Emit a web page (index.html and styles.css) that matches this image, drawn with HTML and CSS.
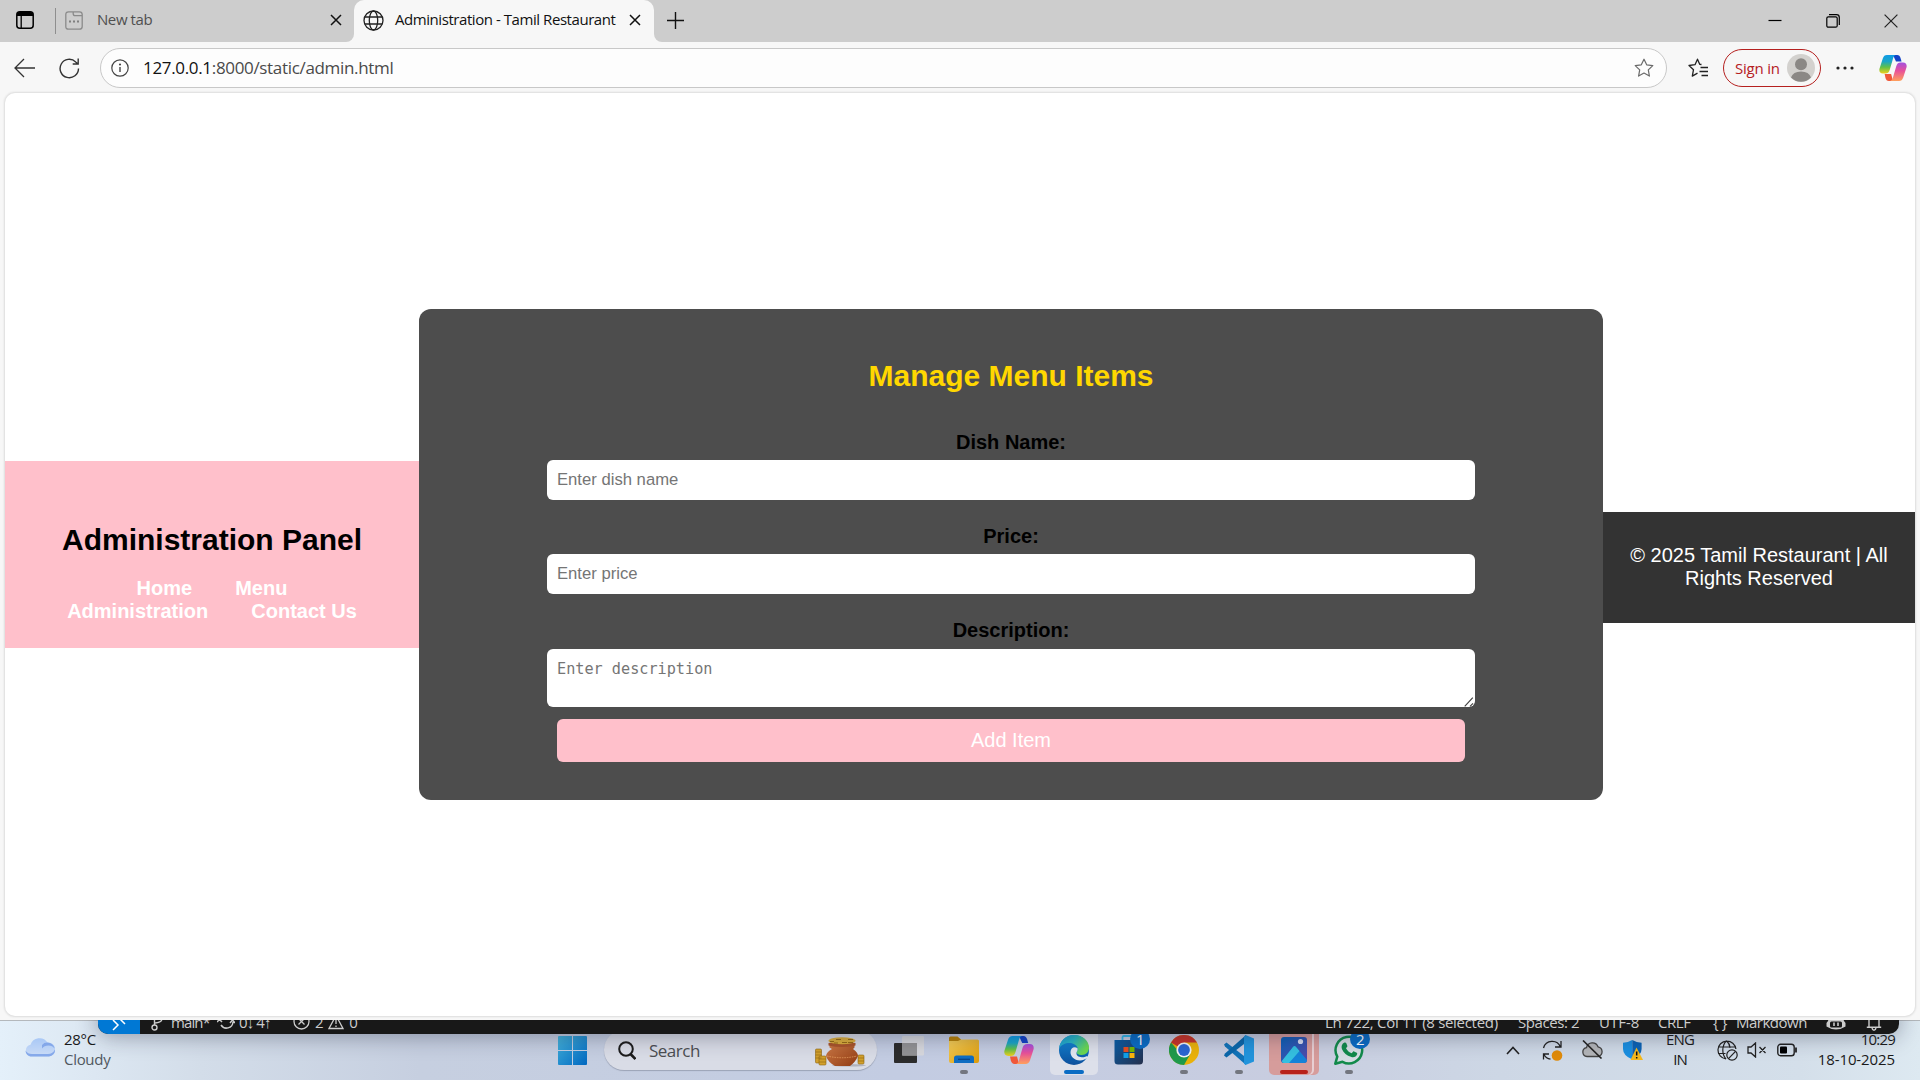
FILE: index.html
```
<!DOCTYPE html>
<html lang="en">
<head>
<meta charset="utf-8">
<title>Administration - Tamil Restaurant</title>
<link rel="stylesheet" href="styles.css">
</head>
<body>
<svg width="0" height="0" class="defs" aria-hidden="true">
  <defs>
    <linearGradient id="cpA" x1="0" y1="0" x2="0" y2="1"><stop offset="0" stop-color="#0f9be6"/><stop offset=".35" stop-color="#1aa6c8"/><stop offset=".65" stop-color="#5fc04a"/><stop offset="1" stop-color="#f0cf1c"/></linearGradient>
    <linearGradient id="cpB" x1="0" y1="0" x2="0" y2="1"><stop offset="0" stop-color="#a250e0"/><stop offset=".45" stop-color="#e8509a"/><stop offset="1" stop-color="#ffa05c"/></linearGradient>
    <linearGradient id="edA" x1="0" y1="0" x2="1" y2=".5"><stop offset="0" stop-color="#1b9bd8"/><stop offset=".5" stop-color="#2bb8c4"/><stop offset="1" stop-color="#6cd84e"/></linearGradient>
    <linearGradient id="edB" x1="0" y1="0" x2="0" y2="1"><stop offset="0" stop-color="#1490df"/><stop offset="1" stop-color="#0c4f9c"/></linearGradient>
    <linearGradient id="winG" gradientUnits="userSpaceOnUse" x1="0" y1="0" x2="29" y2="29"><stop offset="0" stop-color="#45b4dc"/><stop offset="1" stop-color="#0067c0"/></linearGradient>
    <linearGradient id="foldG" x1="0" y1="0" x2="1" y2="1"><stop offset="0" stop-color="#f5cf5a"/><stop offset="1" stop-color="#dd9a08"/></linearGradient>
    <linearGradient id="storeG" x1="0" y1="0" x2="1" y2="1"><stop offset="0" stop-color="#0a5fa8"/><stop offset="1" stop-color="#252f4c"/></linearGradient>
    <linearGradient id="potG" x1="0" y1="0" x2="1" y2="1"><stop offset="0" stop-color="#cf7b46"/><stop offset="1" stop-color="#8f3a12"/></linearGradient>
    <linearGradient id="photoG" x1="0" y1="0" x2="1" y2="1"><stop offset="0" stop-color="#0a62b8"/><stop offset="1" stop-color="#5a48a8"/></linearGradient>
    <linearGradient id="cloudG" x1="0" y1="0" x2="0" y2="1"><stop offset="0" stop-color="#a9c8f6"/><stop offset="1" stop-color="#cbdcf6"/></linearGradient>
    <symbol id="copilot" viewBox="0 0 30 28">
      <path d="M15 0h4.500c2 0 3 1.400 3.600 3.300L24.200 7h-6z" fill="#1443c8"/>
      <path d="M8.500 0H18c-1.800.6-2.500 2-3.200 4.500L11.500 16c-1 3-2.200 4-4.800 4H4.200C1 20-.3 17.400.5 14.500L4 3.800C4.900 1.200 6.200 0 8.500 0z" fill="url(#cpA)"/>
      <path d="M15 28h-4.500c-2 0-3-1.400-3.600-3.300L6 20.500h7z" fill="#f0583a"/>
      <path d="M21.500 28H12c1.800-.6 2.500-2 3.200-4.500L18.500 12c1-3 2.200-4 4.800-4h2.500c3.200 0 4.500 2.600 3.700 5.500L26 24.200c-.9 2.600-2.200 3.800-4.500 3.800z" fill="url(#cpB)"/>
    </symbol>
    <symbol id="star" viewBox="0 0 20 20"><path d="M10 1.200l2.700 5.600 6.100.8-4.500 4.300 1.100 6.200-5.400-3-5.400 3 1.100-6.200L1.200 7.600l6.100-.8z" fill="none" stroke="currentColor" stroke-width="1.200" stroke-linejoin="round"/></symbol>
    <symbol id="x" viewBox="0 0 12 12"><path d="M1 1l10 10M11 1L1 11" stroke="currentColor" stroke-width="1.500" fill="none"/></symbol>
  </defs>
</svg>

<div class="browser">
  <div class="tabstrip">
    <div class="strip-left">
      <svg class="ic-space" width="18" height="18" viewBox="0 0 18 18"><rect x=".8" y=".8" width="16.400" height="16.400" rx="3" fill="none" stroke="#000" stroke-width="1.500"/><path d="M1 5V3.500Q1 1 3.500 1h11Q17 1 17 3.500V5z"/><path d="M5.200 5v12" stroke="#000" stroke-width="1.300"/></svg>
      <span class="divider"></span>
      <svg width="18" height="19" viewBox="0 0 18 19"><path d="M3.500.8h4.700v1.900q0 2 2 2h7M3.500.8h11q2.700 0 2.700 2.700v12q0 2.700-2.700 2.700h-11Q.8 18.200.8 15.500v-12Q.8.800 3.500.8z" fill="none" stroke="#8a8a8a" stroke-width="1.300"/><path d="M4 10.500h2m2 0h2m2 0h2" stroke="#808080" stroke-width="2"/></svg>
      <span class="tab-title">New tab</span>
      <svg class="tab-close" width="12" height="12"><use href="#x"/></svg>
    </div>
    <div class="tab-slot">
      <div class="tab">
        <svg width="21" height="21" viewBox="0 0 21 21" fill="none" stroke="#222" stroke-width="1.300"><circle cx="10.500" cy="10.500" r="9.500"/><ellipse cx="10.500" cy="10.500" rx="4.200" ry="9.500"/><path d="M1.800 7h17.400M1.800 14h17.400"/></svg>
        <span class="tab-title active-title">Administration - Tamil Restaurant</span>
        <svg class="tab-close" width="12" height="12"><use href="#x"/></svg>
      </div>
    </div>
    <div class="strip-right">
      <svg width="17" height="17" viewBox="0 0 17 17"><path d="M8.500 0v17M0 8.500h17" stroke="#111" stroke-width="1.400"/></svg>
      <div class="win-controls">
        <svg width="14" height="14"><path d="M.5 6.500h13" stroke="#000" stroke-width="1.200"/></svg>
        <svg width="14" height="14" viewBox="0 0 14 14" fill="none" stroke="#000" stroke-width="1.200"><rect x=".8" y="2.800" width="10.400" height="10.400" rx="1.500"/><path d="M3 .7h7.500q2.800 0 2.800 2.800V11"/></svg>
        <svg width="14" height="14" viewBox="0 0 14 14"><path d="M.6.600l12.800 12.800M13.400.600L.6 13.400" stroke="#222" stroke-width="1.200"/></svg>
      </div>
    </div>
  </div>

  <div class="toolbar">
    <svg width="21" height="20" viewBox="0 0 21 20" fill="none" stroke="#333" stroke-width="1.300"><path d="M10 1L1 10l9 9M1 10h20"/></svg>
    <svg class="ic-reload" width="21" height="21" viewBox="0 0 21 21" fill="none" stroke="#333" stroke-width="1.400"><path d="M19.500 10.500a9.200 9.200 0 1 1-2.800-6.600l2.300 2.100M19.200.5V6h-5.500"/></svg>
    <div class="address">
      <svg width="18" height="18" viewBox="0 0 18 18" fill="none" stroke="#444" stroke-width="1.200"><circle cx="9" cy="9" r="8.200"/><path d="M9 8v5" stroke-width="1.400"/><circle cx="9" cy="5.500" r=".5" fill="#444"/></svg>
      <span class="url"><b>127.0.0.1</b>:8000/static/admin.html</span>
      <svg class="ic-star" width="20" height="20"><use href="#star"/></svg>
    </div>
    <svg class="ic-favs" width="21" height="20" viewBox="0 0 21 20" fill="none" stroke="#222" stroke-width="1.300" stroke-linejoin="round"><path d="M13.500 6.500l-1.800-.2L9.500 1.200 7 6.700l-6 .8 4.500 4.200-1.200 6.400 5.200-3M12.500 9.500H20M11.500 13.500H20M13.500 17.500H20"/></svg>
    <div class="signin"><span>Sign in</span>
      <svg width="28" height="28" viewBox="0 0 28 28"><circle cx="14" cy="14" r="14" fill="#d3d1ce"/><circle cx="14" cy="10.300" r="6" fill="#8b8885"/><path d="M4 23.500q2-6 10-6t10 6q-4 4.200-10 4.200t-10-4.200z" fill="#8b8885"/></svg>
    </div>
    <svg class="ic-more" width="18" height="4" viewBox="0 0 18 4" fill="#222"><circle cx="2" cy="2" r="1.600"/><circle cx="9" cy="2" r="1.600"/><circle cx="16" cy="2" r="1.600"/></svg>
    <svg class="ic-cop" width="28" height="26"><use href="#copilot"/></svg>
  </div>

  <div class="viewport">
    <header class="admin-header">
      <h1>Administration Panel</h1>
      <nav><a>Home</a><a>Menu</a><a>Administration</a><a>Contact Us</a></nav>
    </header>
    <main class="panel">
      <h2>Manage Menu Items</h2>
      <form class="item-form">
        <label for="dish">Dish Name:</label>
        <input id="dish" type="text" placeholder="Enter dish name">
        <label for="price">Price:</label>
        <input id="price" type="text" placeholder="Enter price">
        <label for="desc">Description:</label>
        <div class="area">
          <textarea id="desc" placeholder="Enter description"></textarea>
          <svg class="grip" width="10" height="10" viewBox="0 0 10 10"><path d="M.7 9.300L8.800.7M6 9.300l3-3" stroke="#444" stroke-width="1.200"/></svg>
        </div>
        <button type="button">Add Item</button>
      </form>
    </main>
    <footer class="site-footer"><p>© 2025 Tamil Restaurant | All<br>Rights Reserved</p></footer>
  </div>
</div>

<div class="taskbar">
  <div class="weather">
    <svg width="30" height="20" viewBox="0 0 30 20"><path d="M6.500 19.500a6 6 0 0 1-1-11.800A9.500 9.500 0 0 1 22.500 5.500 7 7 0 0 1 24 19.500z" fill="url(#cloudG)"/><path d="M6.500 19.500h17.500a6.500 6.500 0 0 0 6-7c-2 3.500-4 4.500-7 4.500H7c-3 0-5-1-6.500-3.500.3 3.500 2.500 6 6 6z" fill="#86a9ea"/><path d="M17 8q3-3.500 8-2 4 1.500 4.500 5.500-2-3-6-3-4.500 0-6.500 3z" fill="#6f97e4" opacity=".7"/></svg>
    <div class="two-line"><span>28°C</span><span class="dim">Cloudy</span></div>
  </div>

  <div class="apps">
    <svg class="start" width="29" height="29" viewBox="0 0 29 29" fill="url(#winG)"><path d="M0 1q0-1 1-1h13v14H0zM15 0h13q1 0 1 1v13H15zM0 15h14v14H1q-1 0-1-1zM15 15h14v13q0 1-1 1H15z"/></svg>
    <div class="search">
      <svg width="18" height="19" viewBox="0 0 18 19" fill="none" stroke="#1c1c1c" stroke-width="2"><circle cx="8" cy="8" r="6.800"/><path d="M12.500 13l5 5" stroke-width="2.600"/></svg>
      <span>Search</span>
      <svg class="pot" width="52" height="30" viewBox="0 0 52 30"><ellipse cx="34" cy="28.300" rx="17" ry="1.200" fill="#8a8a96" opacity=".5"/><g fill="#d2a02c" stroke="#8f6412" stroke-width=".6"><rect x=".5" y="12" width="6" height="14" rx="1"/><rect x="4" y="19" width="7" height="9" rx="1"/><rect x="43" y="18" width="6" height="9" rx="1"/><path d="M.5 15h6M.5 18h6M.5 21h6M4 22h7M4 25h7M43 21h6M43 24h6"/></g><path d="M14.500 7h25v3.500L38 12q5 3.500 5 7-2.500 6-8 10H20q-7-4-9-10 .5-4 6-7l-2.500-1.500z" fill="url(#potG)"/><path d="M13.500 6q13-3 27 0v2.500q-13.500 3-27 0z" fill="#a9542a"/><path d="M12 19q15 3.500 30 0" stroke="#f0a96a" stroke-width=".7" fill="none" stroke-dasharray="1.500 1"/><ellipse cx="27" cy="3.800" rx="13.500" ry="3.500" fill="#dcae3c"/><path d="M15 4.500h4m2-2h5m1 3h5m1-3h5M19 6h4m10-.5h5" stroke="#8f6412" stroke-width=".9"/></svg>
    </div>
    <div class="app"><svg width="30" height="28" viewBox="0 0 30 28"><rect x="0" y="7" width="23" height="20" rx="1" fill="#2c2c2c"/><rect x="8" y="0" width="22" height="19.500" rx="1" fill="#d9d9dc" opacity=".88"/><path d="M8 7h15v12.500H8z" fill="#929294"/></svg></div>
    <div class="app run"><svg width="30" height="28" viewBox="0 0 30 28"><path d="M0 2Q0 .5 1.500.5h7L12 3.500V6H0z" fill="#b98207"/><path d="M0 5h9l3-1.500h16.500q1.500 0 1.500 1.500v20q0 2-2 2H2q-2 0-2-2z" fill="url(#foldG)"/><path d="M5 27v-5q0-2.500 2.500-2.500h15Q25 19.500 25 22v5z" fill="#0f6dc2"/><path d="M9 23.300h12" stroke="#0a4688" stroke-width="1.300"/></svg></div>
    <div class="app"><svg width="30" height="28"><use href="#copilot"/></svg></div>
    <div class="app run current"><svg width="30" height="30" viewBox="0 0 30 30"><circle cx="15" cy="15" r="15" fill="url(#edB)"/><path d="M0 13.500C1 5.500 7 0 15 0c9 0 15 6 15 12.500 0 4.500-3 7.500-7.500 7.500-3.500 0-5-1.300-5-2.400 0-.8 1.200-1.300 1.200-3.600C18.700 10.500 14.500 8 10.500 8 6 8 2 10 0 13.500z" fill="url(#edA)"/><path d="M18.700 13.500c-3-2.500-7-1-7.200 3.500-.2 4 3.500 8.500 9.500 8.500 3 0 5-1 6.800-2.200 1-.7 1 .2.500.9-.4.600-.8 1-1.300 1.500 3-3 2-5 0-4.300-5 2-10.200.5-9.500-3.800 0-.8 1.200-1.300 1.200-4.100z" fill="#e3e6f0"/></svg></div>
    <div class="app"><svg width="30" height="30" viewBox="0 0 30 30"><path d="M8.500 6V2.500q0-1.500 1.500-1.500h9" fill="none" stroke="#33b8ea" stroke-width="1.800"/><path d="M.5 5h28.500v21q0 3.500-3.500 3.500H4Q.5 29.500.5 26z" fill="url(#storeG)"/><path d="M9.500 12h5v5h-5z" fill="#e84f20"/><path d="M15.500 12h5v5h-5z" fill="#74b800"/><path d="M9.500 18h5v5h-5z" fill="#12a0e8"/><path d="M15.500 18h5v5h-5z" fill="#fbb50c"/></svg><span class="badge">1</span></div>
    <div class="app run"><svg width="30" height="30" viewBox="0 0 30 30"><circle cx="15" cy="15" r="15" fill="#eab20a"/><path d="M15 15L2 7.500A15 15 0 0 1 28 7.500H15z" fill="#c9342a"/><path d="M2 7.500A15 15 0 0 0 15 30l6.500-11.200L15 15H8.500z" fill="#1f9a4c"/><circle cx="15" cy="15" r="7.600" fill="#f2f3f5"/><circle cx="15" cy="15" r="5.900" fill="#2a66d2"/></svg></div>
    <div class="app run"><svg width="30" height="30" viewBox="0 0 30 30"><path d="M0 9.500L2.500 7.500 22 22.500V30L1 11.500z" fill="#1173b8"/><path d="M0 20.500L2.500 22.500 22 7.500V0L1 18.500z" fill="#0b67aa"/><path d="M21.500 0L30 3.500v23L21.500 30l-1.500-1.500v-27z" fill="#2294dc"/></svg></div>
    <div class="app run alert"><svg width="26" height="26" viewBox="0 0 26 26"><rect width="26" height="26" rx="3" fill="url(#photoG)"/><path d="M1 25L12 10q1.500-1.800 3 0l11 13q0 3-3 3H3q-1.500 0-2-1z" fill="#1583d8"/><path d="M.8 24L12 10q1.500-1.800 3 0l3.500 4L8 26H3Q1 26 .8 24z" fill="#35c0e0"/><circle cx="19.500" cy="4.500" r="2.600" fill="#d7dcf2"/></svg></div>
    <div class="app run"><svg width="30" height="30" viewBox="0 0 30 30"><path d="M1.300 28.700l2-7A13.300 13.300 0 1 1 8.500 26.800z" fill="#dfe9e6" fill-opacity=".5" stroke="#128a4b" stroke-width="2.500" stroke-linejoin="round"/><path d="M10.500 7.500c.8-.3 1.500 0 1.800.8l1 2.400c.2.600 0 1-1.300 2.500 1.500 2.800 3.200 4 5.800 5 1.400-1.800 1.700-2 2.300-1.800l2.600 1.300c.6.300.6.700.4 1.600-.7 2.400-3.300 3.400-5.600 2.700-5-1.400-7.800-4-9.600-8-.9-2.600 0-5.400 2.600-6.500z" fill="#128a4b"/></svg><span class="badge">2</span></div>
  </div>

  <div class="tray">
    <svg class="chev" width="14" height="9" viewBox="0 0 14 9"><path d="M1 8l6-6.500L13 8" fill="none" stroke="#222" stroke-width="1.600"/></svg>
    <svg class="sync" width="21" height="21" viewBox="0 0 21 21" fill="none" stroke="#222" stroke-width="1.300"><path d="M1.500 8A9 9 0 0 1 18.500 7M19 1v6h-6M8.500 19.200A9 9 0 0 1 2 14.500M1.500 19.500v-5.500h5.500"/><circle cx="15" cy="15.500" r="5.300" fill="#e08b0a" stroke="none"/></svg>
    <svg class="cloudoff" width="21" height="19" viewBox="0 0 21 19"><path d="M5 16.500a4.500 4.500 0 0 1-.5-8.900A6 6 0 0 1 16 6.800a5 5 0 0 1 .5 9.700z" fill="#b3b5b8" stroke="#444" stroke-width="1.300"/><path d="M1 .5l18.500 18" stroke="#222" stroke-width="1.600"/></svg>
    <svg class="shield" width="20" height="20" viewBox="0 0 20 20"><path d="M9.300 0Q5 2.500 0 2.800V9q0 6.500 9.300 10.500z" fill="#1b8fe0"/><path d="M9.300 0q4.300 2.500 9.300 2.800V9q0 6.500-9.300 10.500z" fill="#0c63b4"/><path d="M13.500 7.500L20 20H7.500z" fill="#f5b91c"/><path d="M13.700 11.500v4M13.700 17v1.500" stroke="#111" stroke-width="1.500"/></svg>
    <div class="two-line center lang"><span>ENG</span><span>IN</span></div>
    <svg class="net" width="21" height="21" viewBox="0 0 21 21" fill="none" stroke="#222" stroke-width="1.200"><path d="M9 19A9 9 0 1 1 18.900 9M1 7h17.500M1 13.500h7.500M9.500.8Q5.800 4.500 5.800 10T9 19M9.500.8q3 2.700 3.600 7"/><circle cx="15" cy="15" r="5.200"/><path d="M11.500 18.600l7-7.200"/></svg>
    <svg class="vol" width="20" height="16" viewBox="0 0 20 16" fill="none" stroke="#222" stroke-width="1.300"><path d="M1 5h3l4.500-4v14L4 11H1zM12.500 5l6 6M18.500 5l-6 6"/></svg>
    <svg class="bat" width="21" height="14" viewBox="0 0 21 14"><rect x=".8" y="1.300" width="16.400" height="11.400" rx="2.800" fill="none" stroke="#222" stroke-width="1.400"/><rect x="3" y="3.500" width="7" height="7" rx="1"/><path d="M19 4.500v5" stroke="#222" stroke-width="1.800"/></svg>
    <div class="two-line right clock"><span>10:29</span><span class="date">18-10-2025</span></div>
  </div>

  <div class="editor-edge">
    <div class="status">
      <span class="remote"><svg width="14" height="18" viewBox="0 0 14 18" fill="none" stroke="#fff" stroke-width="1.500"><path d="M1 7l5 5-5 5M13 1L8 6l5 5"/></svg></span>
      <svg class="branch" width="14" height="19" viewBox="0 0 14 19" fill="none" stroke="#ccc" stroke-width="1.400"><circle cx="11" cy="4" r="2.500"/><circle cx="3.500" cy="15.500" r="2.500"/><path d="M3.500 13V3M11 6.500q0 4-7 4.500"/></svg>
      <span class="s-main">main*</span>
      <svg class="s-sync" width="18" height="16" viewBox="0 0 18 16" fill="none" stroke="#ccc" stroke-width="1.500"><path d="M2 7a6.500 6.500 0 0 1 13-1M16 8a6.500 6.500 0 0 1-12 3M0 8l2.500-2.500L5 8M13 9l2.500-3L18 9"/></svg>
      <span class="s-count">0↓ 4↑</span>
      <svg class="s-err" width="17" height="17" viewBox="0 0 17 17" fill="none" stroke="#ccc" stroke-width="1.300"><circle cx="8.500" cy="8.500" r="7.500"/><path d="M5.500 5.500l6 6M11.500 5.500l-6 6"/></svg>
      <span class="s-two">2</span>
      <svg class="s-warn" width="16" height="16" viewBox="0 0 16 16" fill="none" stroke="#ccc" stroke-width="1.300"><path d="M8 1.500l7 13H1zM8 6v4M8 11.500v1.500"/></svg>
      <span>0</span>
      <div class="status-right">
        <span class="s-ln">Ln 722, Col 11 (8 selected)</span><span class="s-sp">Spaces: 2</span><span class="s-utf">UTF-8</span><span class="s-crlf">CRLF</span><span class="s-br">{ }</span><span class="s-md">Markdown</span>
        <svg width="20" height="16" viewBox="0 0 20 16"><path d="M4 1h12l2 6 1.500 2v3.500Q15 15.500 10 15.500T.5 12.500V9L2 7z" fill="#ccc"/><rect x="4" y="7.500" width="12" height="6" rx="1.500" fill="#181818"/><path d="M8 8.500v3.500M12 8.500v3.500" stroke="#ccc" stroke-width="1.600"/></svg>
        <svg class="s-bell" width="16" height="18" viewBox="0 0 16 18" fill="none" stroke="#ccc" stroke-width="1.400"><path d="M3 14V7a5 5 0 0 1 10 0v7M.8 14.200h14.400M6 15q.5 2.200 2 2.200T10 15"/></svg>
      </div>
    </div>
  </div>
</div>
</body>
</html>
```

FILE: styles.css
```
* { box-sizing: border-box; }
html, body { margin: 0; height: 100%; }
body {
  display: flex;
  flex-direction: column;
  width: 1920px;
  height: 1080px;
  overflow: hidden;
  font: 15px/20px "Open Sans", sans-serif;
  letter-spacing: -0.42px;
  color: #1a1a1a;
}
svg { display: block; flex: none; }
span { white-space: nowrap; }
.defs { position: absolute; }

/* browser window */
.browser {
  display: flex;
  flex-direction: column;
  height: 1020px;
  flex: none;
  background: #f7f7f7;
}
.tabstrip { display: flex; height: 42px; flex: none; }
.strip-left, .strip-right { display: flex; align-items: center; background: #cdcdcd; padding-bottom: 2px; }
.strip-left { width: 354px; padding-left: 16px; border-radius: 0 0 8px 0; }
.strip-right { flex: 1; padding-left: 13px; border-radius: 0 0 0 8px; }
.divider { width: 1px; height: 26px; background: #8e8e8e; margin: 2px 9px 0 21px; }
.tab-title { margin: 0 0 2px 14px; color: #505050; }
.tab-close { margin-left: auto; color: #111; }
.strip-left .tab-close { margin-right: 12px; }
.tab-slot { width: 300px; background: #cdcdcd; }
.tab {
  display: flex;
  align-items: center;
  height: 42px;
  padding: 0 13px 2px 9px;
  background: #f7f7f7;
  border-radius: 10px 10px 0 0;
}
.tab .tab-title { margin-left: 11px; color: #111; letter-spacing: -0.44px; }
.win-controls { display: flex; gap: 44px; margin: 2px 22px 0 auto; }

.toolbar { display: flex; align-items: center; height: 51px; flex: none; padding: 1px 13px 0 14px; }
.ic-reload { margin-left: 24px; }
.address {
  display: flex;
  align-items: center;
  width: 1567px;
  height: 40px;
  margin-left: 20px;
  padding: 0 12px 0 10px;
  background: #fdfdfd;
  border: 1px solid #c8c8c8;
  border-radius: 20px;
}
.url { margin-left: 14px; font-size: 17px; letter-spacing: -0.33px; color: #4a4a4a; }
.url b { font-weight: 400; color: #111; }
.ic-star { margin-left: auto; color: #6a6a6a; }
.ic-favs { margin-left: 21px; }
.signin {
  display: flex;
  align-items: center;
  justify-content: space-between;
  width: 98px;
  height: 38px;
  margin-left: 14px;
  padding: 0 5px 0 11px;
  border: 1px solid #b5201f;
  border-radius: 19px;
  color: #b5201f;
  letter-spacing: -0.2px;
}
.ic-more { margin-left: 15px; }
.ic-cop { margin-left: auto; }

/* web page */
.viewport {
  display: flex;
  align-items: center;
  height: 923px;
  margin: 0 5px;
  background: #fff;
  border-radius: 10px;
  box-shadow: 0 0 2px 1px #dcdcdc;
  font-family: "Liberation Sans", Arial, sans-serif;
  font-size: 20px;
  line-height: 23px;
  letter-spacing: 0;
  text-align: center;
}
.admin-header { width: 414px; padding: 62px 50px 25px; background: #ffc0cb; }
.admin-header h1, .panel h2 { margin: 0; font-size: 30px; line-height: 34px; color: #000; }
nav { display: flex; flex-wrap: wrap; justify-content: center; column-gap: 43px; margin-top: 20px; }
nav a { font-weight: 700; color: #fff; }
.panel { width: 1184px; height: 491px; padding-top: 50px; background: #4d4d4d; border-radius: 12px; }
.panel h2 { color: #ffd700; }
.item-form { display: flex; flex-direction: column; width: 928px; margin: 13px auto 0; }
.item-form label { margin: 25px 0 6px; font-weight: 700; color: #000; }
.item-form input, .item-form textarea {
  width: 100%;
  border: 0;
  border-radius: 6px;
  background: #fff;
  padding: 0 10px;
  color: #000;
}
.item-form input { height: 40px; font: 16.67px "Liberation Sans", Arial, sans-serif; }
.area { position: relative; height: 58px; margin-top: 1px; }
.item-form textarea {
  display: block;
  height: 58px;
  padding: 10px;
  resize: none;
  overflow: hidden;
  font: 15.2px/20px "DejaVu Sans Mono", monospace;
}
::placeholder { color: #757575; opacity: 1; }
.grip { position: absolute; right: 1px; bottom: 0; }
.item-form button {
  height: 43px;
  margin: 12px 10px 0;
  border: 0;
  border-radius: 6px;
  background: #ffc0cb;
  color: #fff;
  font: 20px "Liberation Sans", Arial, sans-serif;
}
.site-footer { width: 312px; height: 111px; margin-top: 26px; padding-top: 32px; background: #333; color: #fff; }
.site-footer p { margin: 0; }

/* desktop taskbar */
.taskbar {
  position: relative;
  display: flex;
  height: 60px;
  flex: none;
  overflow: hidden;
  background: linear-gradient(90deg, #e4f0fa 0, #d3dde9 200px, #c6cfe0 420px, #c3cce2 900px, #c8cde0 1280px, #cdd7e5 1500px, #d4dfea 1800px, #dde9f1 1920px);
  box-shadow: inset 0 1px #b4b8bc;
}
.weather { display: flex; width: 558px; padding-left: 25px; }
.weather > svg { margin-top: 17px; }
.two-line { display: flex; flex-direction: column; margin: 9px 0 0 9px; line-height: 20px; letter-spacing: -0.3px; }
.dim { color: #505860; }
.apps { display: flex; align-items: flex-start; }
.start { margin-top: 16px; }
.search {
  display: flex;
  align-items: center;
  width: 273px;
  height: 40px;
  margin: 10px 8px 0 17px;
  padding-left: 14px;
  background: #d9dce6;
  border-radius: 20px;
  box-shadow: 0 1px 1px #9ba3b6;
  font-size: 17px;
  letter-spacing: -0.5px;
  color: #4c4e52;
}
.search span { margin: 1px 0 0 13px; }
.pot { margin: 3px 10px 0 auto; }
.app {
  position: relative;
  display: flex;
  align-items: center;
  justify-content: center;
  width: 48px;
  height: 50px;
  margin: 5px 0 0 7px;
  border-radius: 5px;
}
.search + .app { margin-left: 0; }
.run::after {
  content: "";
  position: absolute;
  bottom: 1px;
  left: 20px;
  width: 8px;
  height: 4px;
  border-radius: 2px;
  background: #73767f;
}
.current { background: #dde0ea; }
.current::after { left: 14px; width: 20px; background: #0a6cc4; }
.alert { width: 43px; margin: 5px 6px 0 6px; background: #d69c9b; box-shadow: 2px 0 #e8cfd3, 7px 0 #d69c9b; }
.alert svg { margin-left: 7px; }
.alert::after { left: 11px; width: 28px; background: #b8211a; }
.badge {
  position: absolute;
  top: 4px;
  right: 3px;
  width: 20px;
  height: 20px;
  border-radius: 50%;
  background: #0a6cc4;
  color: #fff;
  line-height: 20px;
  text-align: center;
}
.tray { display: flex; margin-left: auto; padding-right: 25px; align-items: flex-start; }
.chev { margin-top: 26px; }
.sync { margin: 20px 0 0 22px; }
.cloudoff { margin: 20px 0 0 19px; }
.shield { margin: 20px 0 0 20px; }
.lang { width: 30px; margin-left: 22px; letter-spacing: -0.9px; align-items: center; }
.net { margin: 20px 0 0 22px; }
.vol { margin: 22px 0 0 9px; }
.bat { margin: 23px 0 0 10px; }
.clock { width: 83px; margin-left: 14px; align-items: flex-end; letter-spacing: -0.8px; }
.date { letter-spacing: -0.1px; }

/* strip of the editor window showing behind the browser */
.editor-edge {
  position: absolute;
  top: 0;
  left: 98px;
  width: 1801px;
  height: 14px;
  overflow: hidden;
  border-radius: 0 0 10px 10px;
  background: #181818;
}
.taskbar::after {
  content: "";
  position: absolute;
  top: -20px;
  left: 98px;
  width: 1801px;
  height: 34px;
  border-radius: 10px;
  box-shadow: 0 2px 22px rgba(20, 25, 50, .38);
  pointer-events: none;
}
.status { display: flex; align-items: center; height: 27px; margin-top: -12px; color: #ccc; }
.remote { display: flex; align-items: center; justify-content: center; width: 42px; height: 27px; background: #0078d4; }
.branch { margin-left: 11px; }
.s-main { margin-left: 6px; width: 41px; letter-spacing: -0.9px; }
.s-sync { margin-left: 5px; }
.s-count { width: 40px; margin-left: 4px; letter-spacing: -0.9px; }
.s-err { margin-left: 14px; }
.s-two { margin: 0 5px; }
.s-warn { margin-right: 5px; }
.status-right { display: flex; align-items: center; margin-left: auto; padding-right: 17px; }
.s-ln { width: 193px; letter-spacing: -0.3px; }
.s-sp { width: 81px; }
.s-utf { width: 59px; letter-spacing: 0; }
.s-crlf { width: 55px; }
.s-br { width: 23px; }
.s-md { width: 90px; letter-spacing: -0.5px; }
.s-bell { margin-left: 20px; }
```
